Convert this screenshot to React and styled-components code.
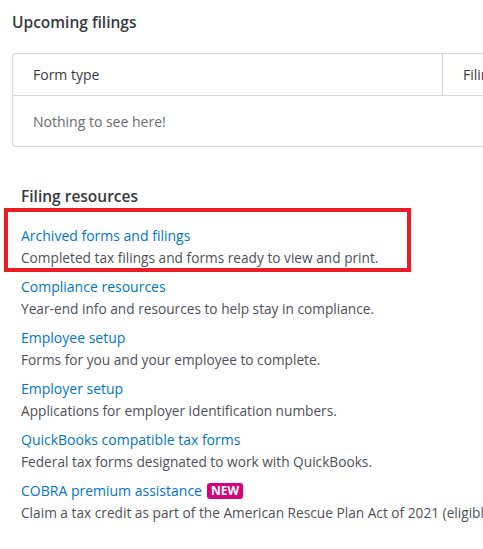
import React from "react";
import styled, { createGlobalStyle } from "styled-components";

const GlobalStyle = createGlobalStyle`
  body {
    margin: 0;
    background: #fff;
    font-family: "Open Sans", "Liberation Sans", sans-serif;
    color: #393a3d;
    overflow: hidden;
  }
`;

const Page = styled.div`
  width: 483px;
  height: 549px;
  overflow: hidden;
  padding: 12px 0 0 12px;
  box-sizing: border-box;
`;

const Heading = styled.h2`
  margin: 0;
  font-size: 15.5px;
  font-weight: 600;
  line-height: 20px;
  color: #393a3d;
`;

const Table = styled.div`
  margin-top: 21px;
  width: 520px;
  border: 1px solid #d4d7dc;
  border-radius: 4px;
`;

const HeaderRow = styled.div`
  display: grid;
  grid-template-columns: 430px 1fr;
  height: 41px;
  border-bottom: 1px solid #d4d7dc;
`;

const HeaderCell = styled.div`
  display: flex;
  align-items: center;
  padding-left: 20px;
  font-size: 14px;
  color: #393a3d;
  white-space: nowrap;
  border-right: ${(p) => (p.divider ? "1px solid #d4d7dc" : "none")};
`;

const EmptyRow = styled.div`
  height: 50px;
  display: flex;
  align-items: center;
  padding-left: 20px;
  font-size: 14px;
  color: #6b6c72;
`;

const Resources = styled.section`
  margin-top: 39px;
  padding-left: 9px;
`;

const List = styled.div`
  margin-top: 20px;
  display: flex;
  flex-direction: column;
  gap: 9px;
`;

const Item = styled.div`
  position: relative;
  display: flex;
  flex-direction: column;
  gap: 2px;
`;

const Highlight = styled.div`
  position: absolute;
  left: -17px;
  top: -18px;
  width: 407px;
  height: 64px;
  border: 4px solid #ec1c24;
  box-sizing: border-box;
  pointer-events: none;
`;

const ItemLink = styled.a`
  display: flex;
  align-items: center;
  gap: 5px;
  font-size: 14px;
  line-height: 20px;
  color: #0077c5;
  text-decoration: none;
  font-weight: 500;
  white-space: nowrap;
`;

const Desc = styled.div`
  font-size: 13.7px;
  line-height: 20px;
  color: #505156;
  white-space: nowrap;
`;

const Badge = styled.span`
  display: inline-block;
  background: #d4037d;
  color: #fff;
  font-size: 12px;
  font-weight: 700;
  line-height: 16px;
  padding: 0 4px;
  border-radius: 3px;
`;

const items = [
  {
    title: "Archived forms and filings",
    desc: "Completed tax filings and forms ready to view and print.",
    highlight: true,
  },
  {
    title: "Compliance resources",
    desc: "Year-end info and resources to help stay in compliance.",
  },
  {
    title: "Employee setup",
    desc: "Forms for you and your employee to complete.",
  },
  {
    title: "Employer setup",
    desc: "Applications for employer identification numbers.",
  },
  {
    title: "QuickBooks compatible tax forms",
    desc: "Federal tax forms designated to work with QuickBooks.",
  },
  {
    title: "COBRA premium assistance",
    desc: "Claim a tax credit as part of the American Rescue Plan Act of 2021 (eligible employers).",
    badge: "NEW",
  },
];

export default function App() {
  return (
    <Page>
      <GlobalStyle />
      <Heading>Upcoming filings</Heading>
      <Table>
        <HeaderRow>
          <HeaderCell divider>Form type</HeaderCell>
          <HeaderCell>Filing</HeaderCell>
        </HeaderRow>
        <EmptyRow>Nothing to see here!</EmptyRow>
      </Table>
      <Resources>
        <Heading>Filing resources</Heading>
        <List>
          {items.map((it) => (
            <Item key={it.title}>
              {it.highlight && <Highlight />}
              <ItemLink href="#">
                {it.title}
                {it.badge && <Badge>{it.badge}</Badge>}
              </ItemLink>
              <Desc>{it.desc}</Desc>
            </Item>
          ))}
        </List>
      </Resources>
    </Page>
  );
}
